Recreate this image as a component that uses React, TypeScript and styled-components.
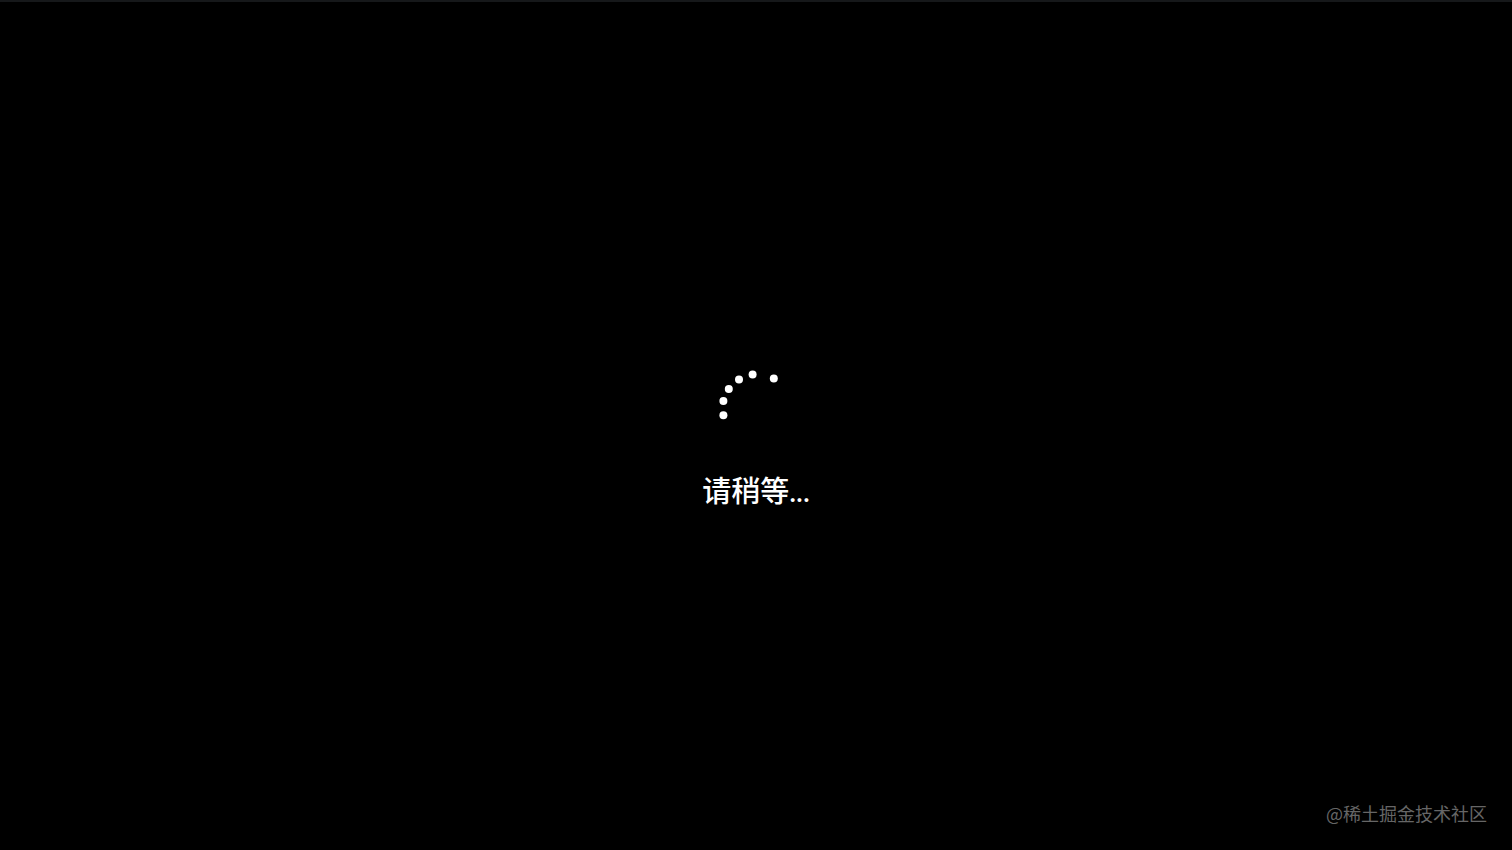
import React from 'react';
import styled, { createGlobalStyle } from 'styled-components';

const GlobalStyle = createGlobalStyle`
  body {
    margin: 0;
    background: #000;
  }
`;

const Screen = styled.div`
  box-sizing: border-box;
  min-height: 100vh;
  display: grid;
  grid-template-rows: 1fr auto 1fr;
  border-top: 2px solid #16181a;
  background: #000;
`;

const Status = styled.main`
  grid-row: 2;
  display: flex;
  flex-direction: column;
  align-items: center;
  gap: 25px;
  padding-top: 29px;
`;

const Spinner = styled.svg`
  width: 76px;
  height: 76px;
  fill: #fff;
`;

const Message = styled.p`
  margin: 0;
  font: 500 29px/40px Lato, 'Noto Sans CJK SC', sans-serif;
  color: #fff;
`;

const Credit = styled.footer`
  grid-row: 3;
  align-self: end;
  justify-self: end;
  padding: 0 25px 24px;
  font: 400 18px/26px 'Noto Sans CJK SC', sans-serif;
  color: #666;
`;

const dots = [
  [5.4, 45.2],
  [5.4, 31],
  [10.8, 19],
  [21, 9.4],
  [34.6, 4.4],
  [55.8, 8.4],
];

export default function App() {
  return (
    <>
      <GlobalStyle />
      <Screen>
        <Status role="status">
          <Spinner viewBox="0 0 76 76" aria-hidden="true">
            {dots.map(([x, y]) => (
              <circle key={`${x}-${y}`} cx={x} cy={y} r="4" />
            ))}
          </Spinner>
          <Message>请稍等...</Message>
        </Status>
        <Credit>@稀土掘金技术社区</Credit>
      </Screen>
    </>
  );
}
